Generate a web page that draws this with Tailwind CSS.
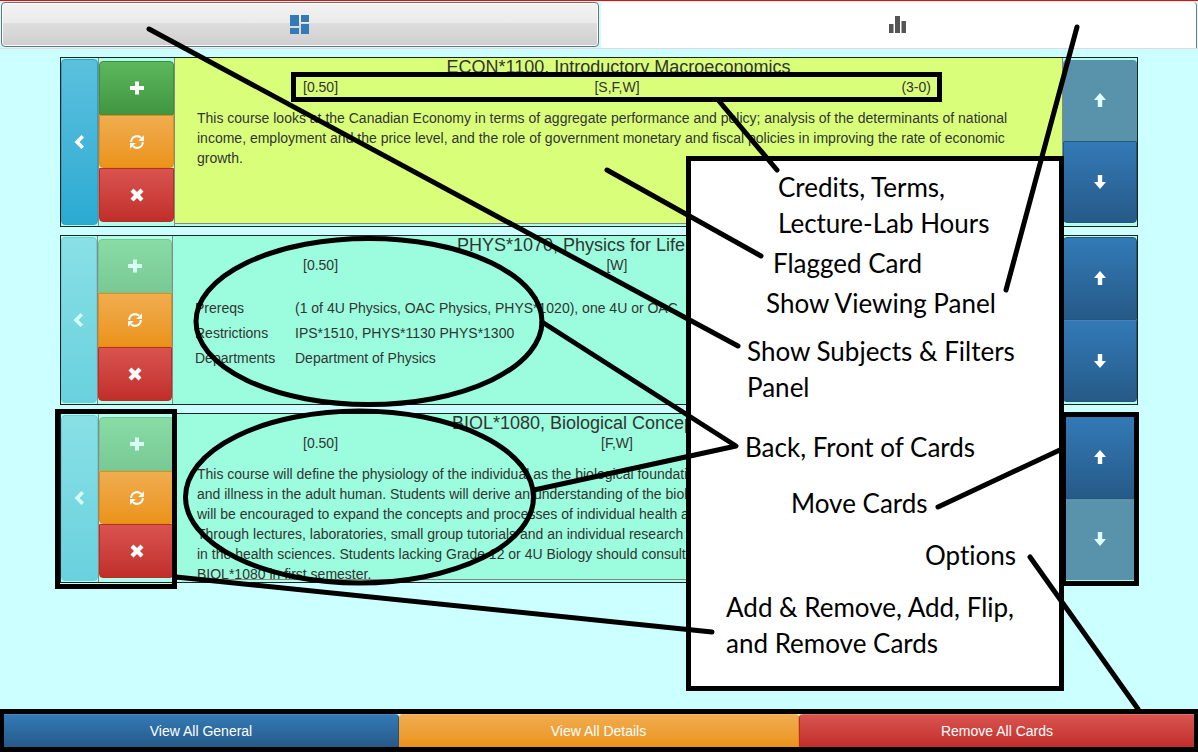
<!DOCTYPE html>
<html lang="en">
<head>
<meta charset="utf-8">
<title>Course Cards</title>
<script src="https://cdn.jsdelivr.net/npm/@tailwindcss/browser@4"></script>
</head>
<body class="relative flex min-h-screen flex-col bg-[#ccffff] font-['Liberation_Sans',Arial,sans-serif] text-sm leading-5 text-[#333333]">

<svg class="hidden" aria-hidden="true">
  <symbol id="plus" viewBox="0 0 14 14"><path fill="currentColor" d="M5 .500h4V5h5v4H9v4.500H5V9H0V5h5z"/></symbol>
  <symbol id="remove" viewBox="0 0 14 14"><path fill="currentColor" d="M3.500 .500 7 4 10.500 .500 13.500 3.500 10 7l3.500 3.500-3 3L7 10l-3.500 3.500-3-3L4 7 .500 3.500z"/></symbol>
  <symbol id="refresh" viewBox="0 0 14 14"><path fill="none" stroke="currentColor" stroke-width="2" d="M1.200 7A5.800 5.800 0 0 1 11 2.800M12.800 7A5.800 5.800 0 0 1 3 11.200"/><path fill="currentColor" d="M14 .200V6H8.200zM0 13.800V8h5.800z"/></symbol>
  <symbol id="chevron" viewBox="0 0 14 14"><path fill="currentColor" d="M8.500 0 11 2.500 6.500 7l4.500 4.500L8.500 14l-7-7z"/></symbol>
  <symbol id="up" viewBox="0 0 14 14"><path fill="currentColor" d="M7 0l6 7H9.200v7H4.800V7H1z"/></symbol>
  <symbol id="down" viewBox="0 0 14 14"><path fill="currentColor" d="M7 14l6-7H9.200V0H4.800v7H1z"/></symbol>
</svg>

<header class="border-t border-t-[#ff0000]">
  <nav class="flex h-12 gap-0.5 border-b border-[#dddddd] pt-px px-px">
    <button type="button" aria-label="Show subjects and filters" class="flex h-[45px] flex-1 items-center justify-center rounded-sm border border-[#707070] bg-[linear-gradient(#f2f2f2,#ebebeb_46%,#dddddd_47%,#cfcfcf)] shadow-[inset_0_0_0_1px_#fbfbfb]">
      <svg class="size-5 text-[#337ab7]" viewBox="0 0 20 20" fill="currentColor"><path d="M0 0h9v11H0zM11 0h8v7h-8zM0 13h9v6H0zM11 9h8v10h-8z"/></svg>
    </button>
    <button type="button" aria-label="Show viewing panel" class="flex flex-1 items-center justify-center rounded-t-sm border-r border-[#777777] bg-white">
      <svg class="size-5 text-[#555555]" viewBox="0 0 20 20" fill="currentColor"><path d="M1 9h4.500v9H1zM7 1h5v17H7zM13.500 6h4.500v12h-4.500z"/></svg>
    </button>
  </nav>
</header>

<main class="mx-[60px] flex flex-1 flex-col gap-2 pt-2">

  <article class="flex h-[170px] border border-[#222222] bg-[#b0ffe8]">
    <div class="flex w-[38px] border-r border-[#888888] pt-px pb-px">
      <button type="button" aria-label="Add and remove" class="flex flex-1 items-center justify-center rounded border border-[#28a4c9] bg-linear-to-b from-[#5bc0de] to-[#2aabd2] text-white"><svg class="size-3.5"><use href="#chevron"/></svg></button>
    </div>
    <div class="flex w-[76px] flex-col border-r border-[#888888] pt-[3px] pb-1">
      <button type="button" aria-label="Add" class="flex flex-1 items-center justify-center rounded-t border border-[#3e8f3e] bg-linear-to-b from-[#5cb85c] to-[#419641] text-white"><svg class="size-3.5"><use href="#plus"/></svg></button>
      <button type="button" aria-label="Flip" class="flex flex-1 items-center justify-center rounded-b border border-[#e38d13] bg-linear-to-b from-[#f0ad4e] to-[#eb9316] text-white"><svg class="size-3.5"><use href="#refresh"/></svg></button>
      <button type="button" aria-label="Remove" class="flex flex-1 items-center justify-center rounded-b border border-[#b92c28] bg-linear-to-b from-[#d9534f] to-[#c12e2a] text-white"><svg class="size-3.5"><use href="#remove"/></svg></button>
    </div>
    <section class="mb-0.5 min-w-0 flex-1 overflow-hidden border-r border-b border-[#888888] bg-[#d9ff7a] px-[22px]">
      <h2 class="h-[19px] text-center text-lg leading-[19px]">ECON*1100, Introductory Macroeconomics</h2>
      <div class="mr-[109px] ml-[106px] grid grid-cols-3"><span>[0.50]</span><span class="text-center">[S,F,W]</span><span class="text-right">(3-0)</span></div>
      <p class="mt-[11px]">This course looks at the Canadian Economy in terms of aggregate performance and policy; analysis of the determinants of national income, employment and the price level, and the role of government monetary and fiscal policies in improving the rate of economic growth.</p>
    </section>
    <div class="flex w-[74px] flex-col pt-0.5 pb-[3px]">
      <button type="button" disabled aria-label="Move up" class="flex flex-1 items-center justify-center rounded-t bg-[#5992ab] text-[#e0fff8]"><svg class="size-3.5"><use href="#up"/></svg></button>
      <button type="button" aria-label="Move down" class="flex flex-1 items-center justify-center rounded-b border border-[#245580] bg-linear-to-b from-[#337ab7] to-[#265a88] text-white"><svg class="size-3.5"><use href="#down"/></svg></button>
    </div>
  </article>

  <article class="flex h-[170px] border border-[#222222] bg-[#b0ffe8]">
    <div class="flex w-[37px] border-r border-[#888888] pt-px pb-px">
      <button type="button" disabled aria-label="Add and remove" class="flex flex-1 items-center justify-center rounded border border-[#6cd0dc] bg-linear-to-b from-[#88e0e5] to-[#69d1de] text-[#d8fff6]"><svg class="size-3.5"><use href="#chevron"/></svg></button>
    </div>
    <div class="flex w-[75px] flex-col border-r border-[#888888] pt-[3px] pb-[3px]">
      <button type="button" disabled aria-label="Add" class="flex flex-1 items-center justify-center rounded-t border border-[#76c394] bg-linear-to-b from-[#8adca5] to-[#78c995] text-[#d8fff6]"><svg class="size-3.5"><use href="#plus"/></svg></button>
      <button type="button" aria-label="Flip" class="flex flex-1 items-center justify-center border border-[#e38d13] bg-linear-to-b from-[#f0ad4e] to-[#eb9316] text-white"><svg class="size-3.5"><use href="#refresh"/></svg></button>
      <button type="button" aria-label="Remove" class="flex flex-1 items-center justify-center rounded-b border border-[#b92c28] bg-linear-to-b from-[#d9534f] to-[#c12e2a] text-white"><svg class="size-3.5"><use href="#remove"/></svg></button>
    </div>
    <section class="min-w-0 flex-1 overflow-hidden border-r border-[#888888] bg-[#9bfddd] px-[22px]">
      <h2 class="h-[19px] text-center text-lg leading-[19px]">PHYS*1070, Physics for Life Sciences II</h2>
      <div class="mr-[109px] ml-[108px] grid grid-cols-3"><span>[0.50]</span><span class="text-center">[W]</span></div>
      <table class="mt-5 w-full table-fixed text-left">
        <tbody>
          <tr class="h-[25px]"><th scope="row" class="w-[100px] p-0 font-normal">Prereqs</th><td class="overflow-hidden p-0 whitespace-nowrap">(1 of 4U Physics, OAC Physics, PHYS*1020), one 4U or OAC</td></tr>
          <tr class="h-[25px]"><th scope="row" class="p-0 font-normal">Restrictions</th><td class="p-0">IPS*1510, PHYS*1130 PHYS*1300</td></tr>
          <tr class="h-[25px]"><th scope="row" class="p-0 font-normal">Departments</th><td class="p-0">Department of Physics</td></tr>
        </tbody>
      </table>
    </section>
    <div class="flex w-[74px] flex-col pt-px pb-0.5">
      <button type="button" aria-label="Move up" class="flex flex-1 items-center justify-center rounded-t border border-[#245580] bg-linear-to-b from-[#337ab7] to-[#265a88] text-white"><svg class="size-3.5"><use href="#up"/></svg></button>
      <button type="button" aria-label="Move down" class="flex flex-1 items-center justify-center rounded-b border border-[#245580] border-t-[#4a80b5] bg-linear-to-b from-[#337ab7] to-[#265a88] text-white"><svg class="size-3.5"><use href="#down"/></svg></button>
    </div>
  </article>

  <article class="flex h-[170px] border border-[#222222] bg-[#b0ffe8]">
    <div class="flex w-[38px] border-r border-[#888888] pt-px pb-px">
      <button type="button" disabled aria-label="Add and remove" class="flex flex-1 items-center justify-center rounded border border-[#6cd0dc] bg-linear-to-b from-[#88e0e5] to-[#69d1de] text-[#d8fff6]"><svg class="size-3.5"><use href="#chevron"/></svg></button>
    </div>
    <div class="flex w-[76px] flex-col border-r border-[#888888] pt-[3px] pb-1">
      <button type="button" disabled aria-label="Add" class="flex flex-1 items-center justify-center rounded-t border border-[#76c394] bg-linear-to-b from-[#8adca5] to-[#78c995] text-[#d8fff6]"><svg class="size-3.5"><use href="#plus"/></svg></button>
      <button type="button" aria-label="Flip" class="flex flex-1 items-center justify-center rounded-b border border-[#e38d13] bg-linear-to-b from-[#f0ad4e] to-[#eb9316] text-white"><svg class="size-3.5"><use href="#refresh"/></svg></button>
      <button type="button" aria-label="Remove" class="flex flex-1 items-center justify-center rounded-b border border-[#b92c28] bg-linear-to-b from-[#d9534f] to-[#c12e2a] text-white"><svg class="size-3.5"><use href="#remove"/></svg></button>
    </div>
    <section class="mb-0.5 min-w-0 flex-1 overflow-hidden border-r border-b border-[#888888] bg-[#9bfddd] px-[22px]">
      <h2 class="h-[19px] text-center text-lg leading-[19px]">BIOL*1080, Biological Concepts of Health</h2>
      <div class="mr-[109px] ml-[106px] grid grid-cols-3"><span>[0.50]</span><span class="text-center">[F,W]</span></div>
      <p class="mt-[11px] whitespace-nowrap">This course will define the physiology of the individual as the biological foundation<br>and illness in the adult human. Students will derive an understanding of the biology<br>will be encouraged to expand the concepts and processes of individual health and<br>Through lectures, laboratories, small group tutorials and an individual research<br>in the health sciences. Students lacking Grade 12 or 4U Biology should consult<br>BIOL*1080 in first semester.</p>
    </section>
    <div class="flex w-[74px] flex-col pt-px pb-0.5">
      <button type="button" aria-label="Move up" class="flex flex-1 items-center justify-center rounded-t border border-[#245580] bg-linear-to-b from-[#337ab7] to-[#265a88] text-white"><svg class="size-3.5"><use href="#up"/></svg></button>
      <button type="button" disabled aria-label="Move down" class="flex flex-1 items-center justify-center rounded-b bg-[#5992ab] text-[#e0fff8]"><svg class="size-3.5"><use href="#down"/></svg></button>
    </div>
  </article>
</main>

<footer class="flex h-[43px] border-x-4 border-y-5 border-black text-white">
  <button type="button" class="flex-79 rounded-tr border-t border-r border-t-[#4a86bd] border-r-[#245580] bg-linear-to-b from-[#337ab7] to-[#265a88]">View All General</button>
  <button type="button" class="flex-80 rounded-t border-t border-r border-t-[#f2b866] border-r-[#e38d13] bg-linear-to-b from-[#f0ad4e] to-[#eb9316]">View All Details</button>
  <button type="button" class="flex-79 rounded-tl border-t border-l border-t-[#e06f6b] border-l-[#b92c28] bg-linear-to-b from-[#d9534f] to-[#c12e2a]">Remove All Cards</button>
</footer>

<!-- Annotation layer: outlines, legend, then pointer lines -->
<svg class="pointer-events-none absolute top-0 left-0 h-[752px] w-[1198px]" viewBox="0 0 1198 752" fill="none" stroke="#000" stroke-width="5" aria-hidden="true">
  <rect x="293.500" y="74.500" width="646" height="25"/>
  <rect x="57.500" y="411.500" width="117" height="175"/>
  <rect x="1063.500" y="414.500" width="73" height="169"/>
  <ellipse cx="369" cy="321.500" rx="173" ry="83"/>
  <ellipse cx="359.500" cy="497" rx="174" ry="86"/>
</svg>
<aside class="absolute top-[156px] left-[686px] h-[535px] w-[378px] border-5 border-black bg-white pt-2 font-['Lato',sans-serif] text-[26px] leading-9 whitespace-nowrap text-black [font-variant-ligatures:none]">
  <p class="pl-[87px]">Credits, Terms,<br>Lecture-Lab Hours</p>
  <p class="mt-1 pl-[82px]">Flagged Card</p>
  <p class="mt-1 pl-[75px]">Show Viewing Panel</p>
  <p class="mt-3 pl-14">Show Subjects &amp; Filters<br>Panel</p>
  <p class="mt-6 pl-[54px]">Back, Front of Cards</p>
  <p class="mt-5 pl-[100px]">Move Cards</p>
  <p class="mt-4 pl-[234px]">Options</p>
  <p class="mt-4 pl-[35px]">Add &amp; Remove, Add, Flip,<br>and Remove Cards</p>
</aside>
<svg class="pointer-events-none absolute top-0 left-0 h-[752px] w-[1198px]" viewBox="0 0 1198 752" fill="none" stroke="#000" stroke-width="5" stroke-linecap="round" stroke-linejoin="round" aria-hidden="true">
  <path d="M149 29 738 346M719 101 777 170M607 170 761 256M1077 27 1006 290M542 322 736 446 534 490M938 507 1062 449M1030 557 1138 709M176 577 712 632"/>
</svg>
</body>
</html>
